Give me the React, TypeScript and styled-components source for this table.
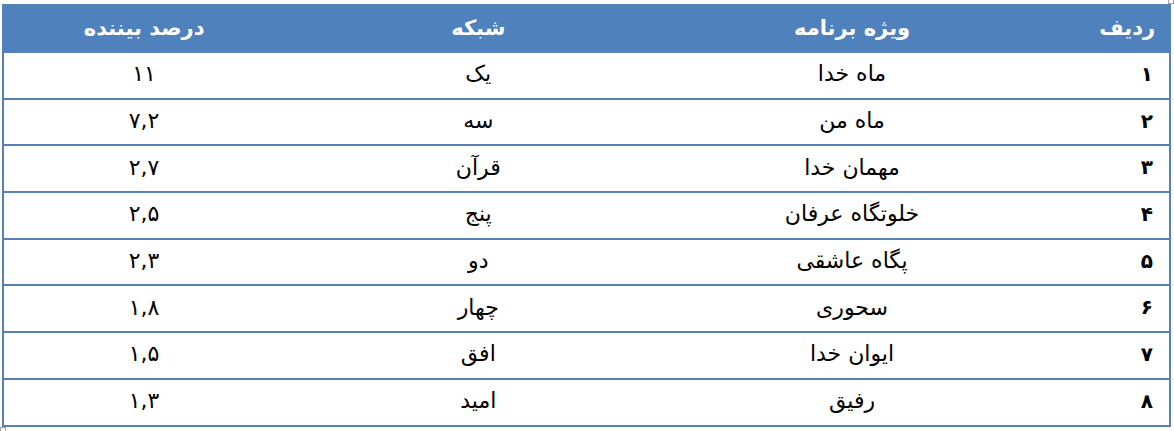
import * as React from "react";
import styled, { createGlobalStyle } from "styled-components";

const blue = "#4f81bd";
const line = "#5780b4";

const Global = createGlobalStyle`
  html, body {
    margin: 0;
    padding: 0;
    background: #ffffff;
  }
`;

const Page = styled.div`
  position: relative;
  height: 431px;
  padding: 4px 3px 0 2px;
  box-sizing: border-box;
  font-family: "DejaVu Sans", "Noto Sans", sans-serif;
`;

const Handle = styled.span<{ $corner: "tr" | "bl" }>`
  position: absolute;
  width: 4px;
  height: 4px;
  border: 1px solid #a0a0a0;
  ${(p) => (p.$corner === "tr" ? "top: -2px; right: 0;" : "bottom: -2px; left: 0;")}
`;

const Table = styled.table`
  width: 1169px;
  border-collapse: collapse;
  direction: rtl;
  border: 2px solid ${line};
`;

const HeadCell = styled.th<{ $align?: "right" | "center"; $w: number }>`
  width: ${(p) => p.$w}px;
  height: 43px;
  padding: 0 14px 2px;
  background: ${blue};
  color: #ffffff;
  font-size: 21px;
  font-weight: bold;
  text-align: ${(p) => p.$align ?? "center"};
  vertical-align: middle;
`;

const Row = styled.tr`
  height: 46.7px;
  border-top: 2px solid ${line};
`;

const Cell = styled.td<{ $align?: "right" | "center"; $bold?: boolean }>`
  padding: 0 16px 3px;
  color: #000000;
  font-size: ${(p) => (p.$bold ? 20 : 22)}px;
  font-weight: ${(p) => (p.$bold ? "bold" : "normal")};
  text-align: ${(p) => p.$align ?? "center"};
  vertical-align: middle;
`;

type Item = { n: string; program: string; channel: string; share: string };

const rows: Item[] = [
  { n: "۱", program: "ماه خدا", channel: "یک", share: "۱۱" },
  { n: "۲", program: "ماه من", channel: "سه", share: "۷,۲" },
  { n: "۳", program: "مهمان خدا", channel: "قرآن", share: "۲,۷" },
  { n: "۴", program: "خلوتگاه عرفان", channel: "پنج", share: "۲,۵" },
  { n: "۵", program: "پگاه عاشقی", channel: "دو", share: "۲,۳" },
  { n: "۶", program: "سحوری", channel: "چهار", share: "۱,۸" },
  { n: "۷", program: "ایوان خدا", channel: "افق", share: "۱,۵" },
  { n: "۸", program: "رفیق", channel: "امید", share: "۱,۳" },
];

const App: React.FC = () => (
  <Page>
    <Global />
    <Handle $corner="tr" />
    <Table>
      <thead>
        <tr>
          <HeadCell $align="right" $w={117}>ردیف</HeadCell>
          <HeadCell $w={368}>ویژه برنامه</HeadCell>
          <HeadCell $w={404}>شبکه</HeadCell>
          <HeadCell $w={280}>درصد بیننده</HeadCell>
        </tr>
      </thead>
      <tbody>
        {rows.map((r) => (
          <Row key={r.n}>
            <Cell $align="right" $bold>
              {r.n}
            </Cell>
            <Cell>{r.program}</Cell>
            <Cell>{r.channel}</Cell>
            <Cell>{r.share}</Cell>
          </Row>
        ))}
      </tbody>
    </Table>
    <Handle $corner="bl" />
  </Page>
);

export default App;
